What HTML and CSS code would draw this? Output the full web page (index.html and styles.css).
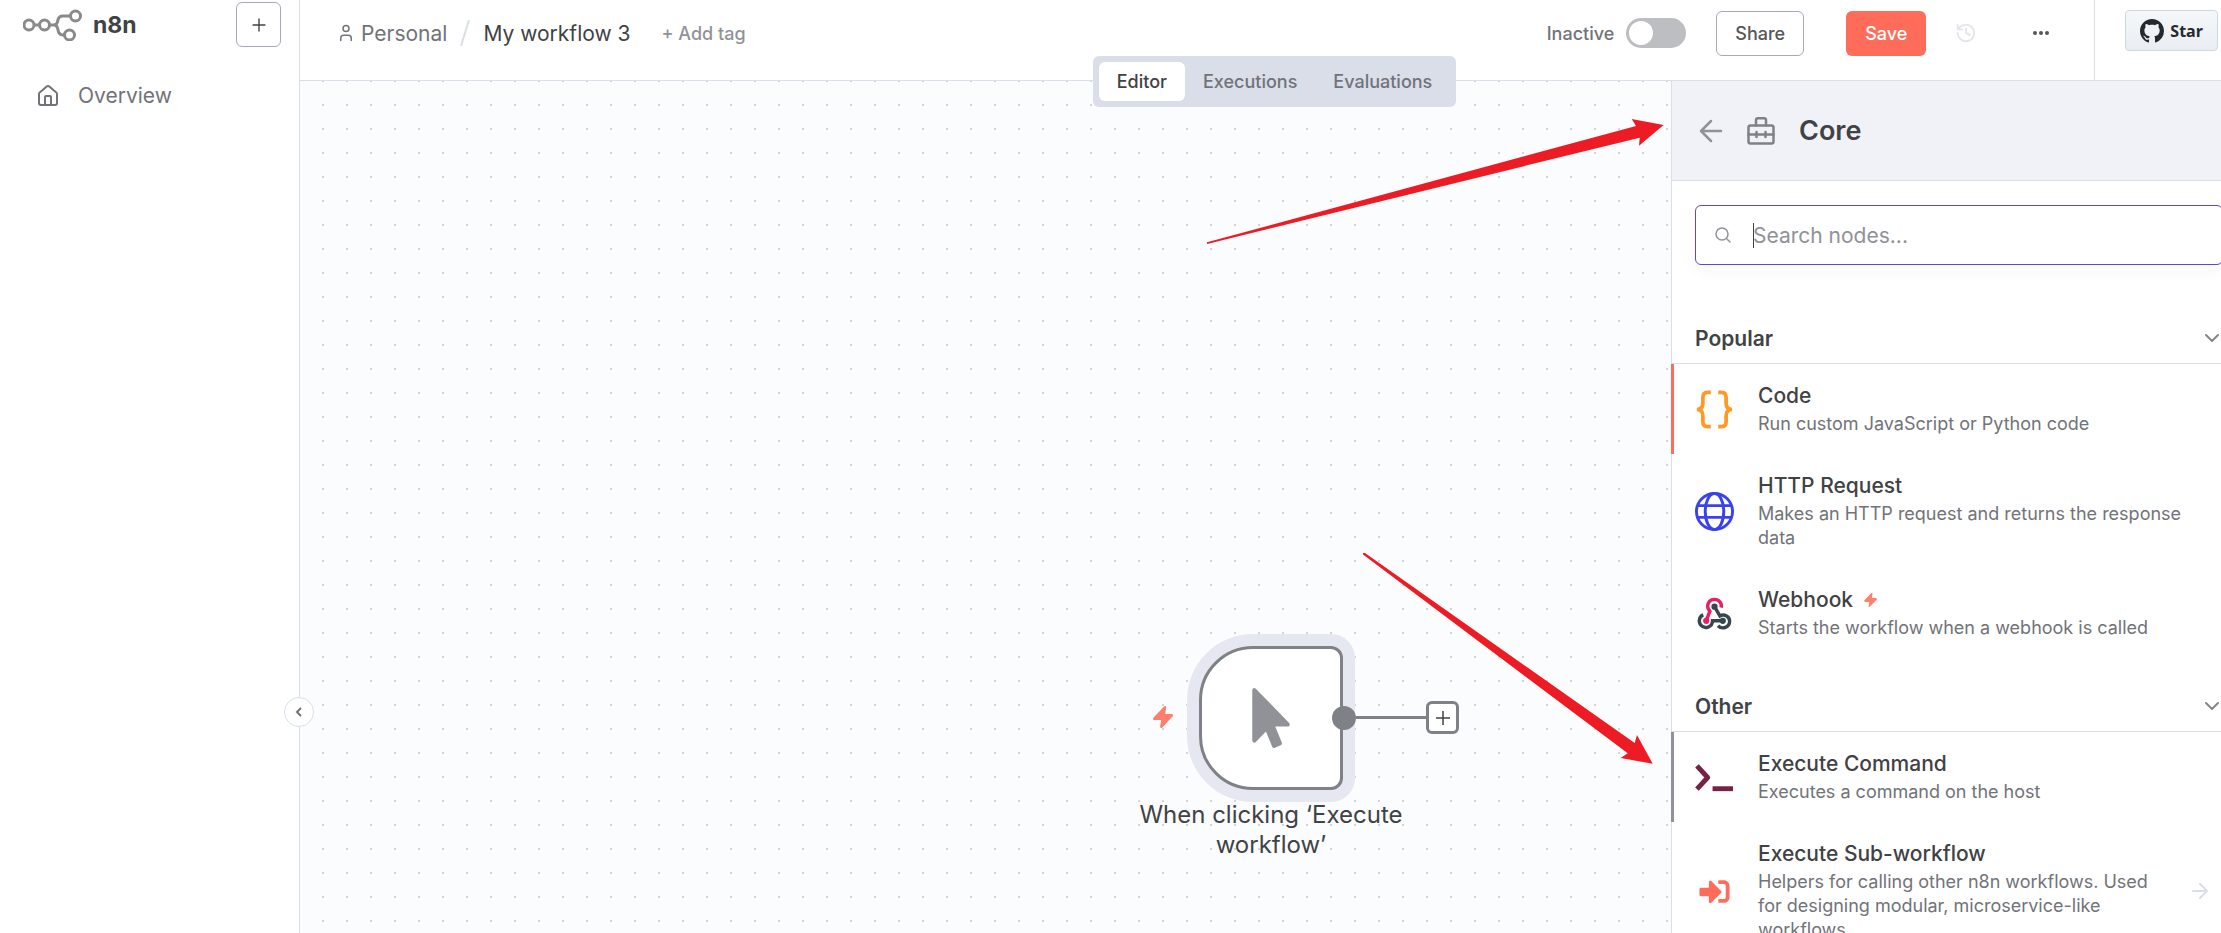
FILE: index.html
```html
<!DOCTYPE html>
<html lang="en">
<head>
<meta charset="utf-8">
<title>My workflow 3 - n8n</title>
<link rel="stylesheet" href="styles.css">
</head>
<body>
<div class="app">
  <aside class="sidebar">
    <div class="sidebar-top">
      <a class="brand" href="#">
        <svg class="brand-mark" viewBox="0 0 60 32" width="60" height="32" fill="none" stroke="currentColor" stroke-width="3">
          <circle cx="6" cy="16" r="5"/><circle cx="21.500" cy="16" r="5"/><circle cx="52.500" cy="7" r="5"/><circle cx="46.500" cy="26" r="5"/>
          <path d="M11 16h5.500M26.500 16h4c3 0 4-2 4.300-4.500C35.300 8.500 37 7 40 7h7.500M31 16c3 0 3.500 2 4 5 .500 3 2 5 5 5h1.500"/>
        </svg>
        <span class="brand-name">n8n</span>
      </a>
      <button class="add-button" aria-label="Add">
        <svg viewBox="0 0 24 24" width="24" height="24" fill="none" stroke="currentColor" stroke-width="2"><path d="M5 12h14M12 5v14"/></svg>
      </button>
    </div>
    <nav>
      <a class="nav-item" href="#">
        <svg viewBox="0 0 24 24" width="24" height="24" fill="none" stroke="currentColor" stroke-width="2" stroke-linecap="round" stroke-linejoin="round"><path d="M15 21v-8a1 1 0 0 0-1-1h-4a1 1 0 0 0-1 1v8"/><path d="M3 10a2 2 0 0 1 .709-1.528l7-5.999a2 2 0 0 1 2.582 0l7 5.999A2 2 0 0 1 21 10v9a2 2 0 0 1-2 2H5a2 2 0 0 1-2-2z"/></svg>
        <span>Overview</span>
      </a>
    </nav>
    <button class="collapse" aria-label="Collapse sidebar">
      <svg viewBox="0 0 12 12" width="12" height="12" fill="none" stroke="currentColor" stroke-width="2"><path d="M8 2 4 6l4 4"/></svg>
    </button>
  </aside>

  <div class="main">
    <header class="header">
      <div class="header-row">
        <div class="crumbs">
          <a class="crumb-project" href="#">
            <svg viewBox="0 0 24 24" width="18" height="18" fill="none" stroke="currentColor" stroke-width="2" stroke-linecap="round" stroke-linejoin="round"><path d="M19 22v-3a4 4 0 0 0-4-4H9a4 4 0 0 0-4 4v3"/><circle cx="12" cy="6" r="4"/></svg>
            <span>Personal</span>
          </a>
          <svg class="slash" viewBox="0 0 10 26" width="10" height="26" fill="none" stroke="currentColor" stroke-width="2"><path d="M9 0 1 26"/></svg>
          <h1 class="workflow-name">My workflow 3</h1>
          <button class="add-tag">+ Add tag</button>
        </div>
        <div class="actions">
          <label class="activation">
            <span>Inactive</span>
            <input class="switch" type="checkbox" role="switch">
          </label>
          <button class="btn share">Share</button>
          <button class="btn save">Save</button>
          <button class="icon-button history" aria-label="Workflow history">
            <svg viewBox="0 0 24 24" width="22" height="22" fill="none" stroke="currentColor" stroke-width="2" stroke-linecap="round" stroke-linejoin="round"><path d="M3 12a9 9 0 1 0 9-9 9.750 9.750 0 0 0-6.740 2.740L3 8"/><path d="M3 3v5h5"/><path d="M12 7v5l4 2"/></svg>
          </button>
          <button class="icon-button more" aria-label="More">
            <svg viewBox="0 0 18 6" width="18" height="6" fill="currentColor"><circle cx="3" cy="3" r="2"/><circle cx="9" cy="3" r="2"/><circle cx="15" cy="3" r="2"/></svg>
          </button>
        </div>
      </div>
      <div class="github">
        <a class="star" href="#">
          <svg viewBox="0 0 16 16" width="24" height="24" fill="currentColor"><path d="M8 0C3.580 0 0 3.580 0 8c0 3.540 2.290 6.530 5.470 7.590.4.070.55-.17.55-.38 0-.19-.01-.82-.01-1.490-2.010.37-2.530-.49-2.690-.94-.09-.23-.48-.94-.82-1.130-.28-.15-.68-.52-.01-.53.63-.01 1.080.58 1.230.82.72 1.210 1.870.87 2.330.66.07-.52.28-.87.51-1.070-1.780-.2-3.640-.89-3.640-3.950 0-.87.31-1.590.82-2.150-.08-.2-.36-1.020.08-2.120 0 0 .67-.21 2.200.82.64-.18 1.320-.27 2-.27s1.360.09 2 .27c1.530-1.040 2.200-.82 2.200-.82.44 1.100.16 1.920.08 2.120.51.56.82 1.270.82 2.150 0 3.070-1.870 3.750-3.650 3.950.29.25.54.73.54 1.480 0 1.070-.01 1.930-.01 2.200 0 .21.15.46.55.38A8.010 8.010 0 0 0 16 8c0-4.420-3.580-8-8-8z"/></svg>
          <span>Star</span>
        </a>
      </div>
      <div class="tabs-anchor">
        <div class="tabs" role="tablist">
          <button class="tab active" role="tab" aria-selected="true">Editor</button>
          <button class="tab" role="tab" aria-selected="false">Executions</button>
          <button class="tab" role="tab" aria-selected="false">Evaluations</button>
        </div>
      </div>
    </header>

    <div class="workspace">
      <main class="canvas">
        <div class="node">
          <svg class="node-bolt" viewBox="0 0 20 22" width="20" height="22" fill="currentColor"><path d="M11 .400c1-.900 2.400-.400 2.200 1L12.200 8H18.500c1.500 0 2 1.400 1 2.500L9.300 21.400c-1 1-2.500.400-2.200-1L8.200 14H1.500C0 14-.400 12.500.600 11.500z"/></svg>
          <div class="node-box">
            <svg viewBox="0 0 320 512" width="38" height="60" fill="currentColor"><path d="M302.189 329.126H196.105l55.831 135.993c3.889 9.428-.555 19.999-9.444 23.999l-49.165 21.427c-9.165 4-19.443-.571-23.332-9.714l-53.053-129.136-86.664 89.138C18.729 472.710 0 463.554 0 447.977V18.299C0 1.899 19.921-6.096 30.277 5.443l284.412 292.542c11.472 11.179 3.007 31.141-12.500 31.141z"/></svg>
          </div>
          <div class="connector">
            <span class="connector-dot"></span>
            <span class="connector-line"></span>
            <button class="connector-add" aria-label="Add node">
              <svg viewBox="0 0 14 14" width="14" height="14" fill="none" stroke="currentColor" stroke-width="1.500"><path d="M0 7h14M7 0v14"/></svg>
            </button>
          </div>
          <p class="node-label">When clicking ‘Execute workflow’</p>
        </div>
        <svg class="annotations" width="1400" height="800" viewBox="300 81 1400 800" fill="#ed1c24">
          <path d="M1207 242.300 1636 126 1631.700 119 1663.700 125 1639 145.700 1639.700 137.700 1207 244z"/>
          <path d="M1363 553h2L1634.700 743 1637 735 1652.700 763.700 1620.700 758 1627.700 753.300 1363 554.500z"/>
        </svg>
      </main>

      <aside class="panel">
        <div class="panel-header">
          <button class="back" aria-label="Back">
            <svg viewBox="0 0 24 24" width="24" height="24" fill="none" stroke="currentColor" stroke-width="2.500" stroke-linecap="round" stroke-linejoin="round"><path d="M12 2 2 12l10 10M2 12h20"/></svg>
          </button>
          <svg class="toolbox" viewBox="0 0 28 28" width="28" height="28" fill="none" stroke="currentColor" stroke-width="2.500" stroke-linecap="round" stroke-linejoin="round"><rect x="1.500" y="8.500" width="25" height="18" rx="2"/><path d="M9 8.500V3.300a2 2 0 0 1 2-2h6a2 2 0 0 1 2 2v5.200M1.500 17.500h25M9.500 15v5M18.500 15v5"/></svg>
          <h2 class="panel-title">Core</h2>
        </div>
        <label class="search">
          <svg viewBox="0 0 16 16" width="16" height="16" fill="none" stroke="currentColor" stroke-width="1.500" stroke-linecap="round"><circle cx="7" cy="7" r="6"/><path d="m12 12 3 3"/></svg>
          <span class="search-field">
            <input type="text" placeholder="Search nodes..." aria-label="Search nodes">
            <span class="caret"></span>
          </span>
        </label>

        <section class="category">
          <button class="category-head"><span>Popular</span>
            <svg viewBox="0 0 14 8" width="14" height="8" fill="none" stroke="currentColor" stroke-width="2" stroke-linecap="round" stroke-linejoin="round"><path d="m1 1 6 6 6-6"/></svg>
          </button>
          <ul class="items">
            <li><button class="item selected">
              <svg class="item-icon" viewBox="0 0 40 42" fill="none" stroke="#ff9922" stroke-width="4"><path d="M16 2.500h-3.500C9 2.500 7.500 5 7.500 8v6c0 4-2 7-6.500 7 4.500 0 6.500 3 6.500 7v6c0 3 1.500 5.500 5 5.500H16M24 2.500h3.500c3.500 0 5 2.500 5 5.500v6c0 4 2 7 6.500 7-4.500 0-6.500 3-6.500 7v6c0 3-1.500 5.500-5 5.500H24"/></svg>
              <span class="item-text"><span class="item-title">Code</span><span class="item-desc">Run custom JavaScript or Python code</span></span>
            </button></li>
            <li><button class="item">
              <svg class="item-icon" viewBox="0 0 40 40" fill="none" stroke="#3a42e9" stroke-width="3"><circle cx="20" cy="20" r="18.500"/><ellipse cx="20" cy="20" rx="9.500" ry="18.500"/><path d="M3 14h34M3 26h34"/></svg>
              <span class="item-text"><span class="item-title">HTTP Request</span><span class="item-desc">Makes an HTTP request and returns the response data</span></span>
            </button></li>
            <li><button class="item">
              <svg class="item-icon" viewBox="-3 -4 40 40" fill="none" stroke-width="3.500">
                <path stroke="#37474f" d="M17 9l5.500 9.500c4-2.500 10 0 10 5.500 0 6-7.500 9-12 4.500"/>
                <path stroke="#37474f" d="M5.500 17.500C1.500 19 0 24 3 28c4 4.500 12 2 12-4.500h10.500"/>
                <path stroke="#ea1e63" d="M23.800 10C25 5.500 21.500 1.500 17 1.500c-6 0-9.500 7-4.700 12.200L8.500 23"/>
                <g stroke="none"><circle cx="17" cy="9" r="3.200" fill="#37474f"/><circle cx="25.500" cy="23.500" r="3.200" fill="#37474f"/><circle cx="8.500" cy="23.500" r="3.200" fill="#ea1e63"/></g>
              </svg>
              <span class="item-text"><span class="item-title">Webhook <svg class="bolt" viewBox="0 0 20 22" width="13" height="14" fill="currentColor"><path d="M11 .400c1-.900 2.400-.400 2.200 1L12.200 8H18.500c1.500 0 2 1.400 1 2.500L9.300 21.400c-1 1-2.500.400-2.200-1L8.200 14H1.500C0 14-.400 12.500.600 11.500z"/></svg></span><span class="item-desc">Starts the workflow when a webhook is called</span></span>
            </button></li>
          </ul>
        </section>

        <section class="category">
          <button class="category-head"><span>Other</span>
            <svg viewBox="0 0 14 8" width="14" height="8" fill="none" stroke="currentColor" stroke-width="2" stroke-linecap="round" stroke-linejoin="round"><path d="m1 1 6 6 6-6"/></svg>
          </button>
          <ul class="items">
            <li><button class="item hovered">
              <svg class="item-icon" viewBox="0 0 40 40" fill="none" stroke="#772244" stroke-width="5" stroke-linejoin="round"><path d="M2 8l11 12L2 32"/><path d="M18 31.500h21"/></svg>
              <span class="item-text"><span class="item-title">Execute Command</span><span class="item-desc">Executes a command on the host</span></span>
            </button></li>
            <li><button class="item with-arrow">
              <svg class="item-icon" viewBox="-76 -76 664 664" fill="#ff6d5a"><path d="M416 448h-84c-6.600 0-12-5.400-12-12v-40c0-6.600 5.400-12 12-12h84c17.700 0 32-14.300 32-32V160c0-17.700-14.300-32-32-32h-84c-6.600 0-12-5.400-12-12V76c0-6.600 5.400-12 12-12h84c53 0 96 43 96 96v192c0 53-43 96-96 96zm-47-201L201 79c-15-15-41-4.500-41 17v96H24c-13.300 0-24 10.700-24 24v96c0 13.300 10.700 24 24 24h136v96c0 21.500 26 32 41 17l168-168c9.300-9.400 9.300-24.600 0-34z"/></svg>
              <span class="item-text"><span class="item-title">Execute Sub-workflow</span><span class="item-desc">Helpers for calling other n8n workflows. Used for designing modular, microservice-like workflows</span></span>
              <svg class="item-arrow" viewBox="0 0 16 16" width="16" height="16" fill="none" stroke="currentColor" stroke-width="2" stroke-linecap="round" stroke-linejoin="round"><path d="M1 8h14M8 1l7 7-7 7"/></svg>
            </button></li>
          </ul>
        </section>
      </aside>
    </div>
  </div>
</div>
</body>
</html>
```
FILE: styles.css
```css
:root {
  --text-dark: #414244;
  --text-base: #717379;
  --text-light: #909298;
  --line: #d9dee8;
  --primary: #ff6d5a;
}

* { box-sizing: border-box; }

body {
  margin: 0;
  font-family: Inter, "Liberation Sans", sans-serif;
  font-size: 18px;
  color: var(--text-base);
  background: #fff;
}

button {
  margin: 0;
  padding: 0;
  border: 0;
  background: none;
  color: inherit;
  font: inherit;
}

a { color: inherit; text-decoration: none; }
svg { display: block; flex: none; }
h1, h2, p, ul { margin: 0; padding: 0; }
ul { list-style: none; }

.app { display: flex; height: 100vh; overflow: hidden; }

/* Sidebar */
.sidebar {
  position: relative;
  z-index: 2;
  flex: none;
  width: 300px;
  border-right: 1px solid var(--line);
  background: #fff;
}
.sidebar-top {
  display: flex;
  align-items: center;
  justify-content: space-between;
  padding: 2px 18px 0 23px;
}
.brand { display: flex; align-items: center; gap: 10px; }
.brand-mark { color: #8a8a8a; }
.brand-name { font-size: 23px; font-weight: 700; color: var(--text-dark); }
.add-button {
  display: grid;
  place-items: center;
  width: 45px;
  height: 45px;
  border: 1px solid #a5aabb;
  border-radius: 6px;
  color: var(--text-dark);
}
.add-button svg { width: 22px; height: 22px; stroke-width: 1.5; }
.nav-item {
  display: flex;
  align-items: center;
  gap: 18px;
  margin-top: 31px;
  padding: 0 36px;
  font-size: 21px;
  line-height: 36px;
}
.collapse {
  position: absolute;
  top: 697px;
  right: -15px;
  display: grid;
  place-items: center;
  width: 30px;
  height: 30px;
  border: 1px solid var(--line);
  border-radius: 50%;
  background: #fff;
}

/* Header */
.main { display: flex; flex: 1; flex-direction: column; min-width: 0; }
.header {
  position: relative;
  z-index: 1;
  display: flex;
  flex: none;
  height: 81px;
  border-bottom: 1px solid var(--line);
  background: #fff;
}
.header-row {
  display: flex;
  flex: 1;
  align-items: center;
  justify-content: space-between;
  padding: 0 44px 14px 37px;
}
.crumbs { display: flex; align-items: center; font-size: 21px; }
.crumb-project { display: flex; align-items: center; gap: 6px; }
.slash { margin: 0 13px; color: var(--line); }
.workflow-name { font-size: 21px; font-weight: 400; color: var(--text-dark); }
.add-tag { margin-left: 31px; font-size: 18px; font-weight: 500; color: var(--text-light); }
.actions { display: flex; align-items: center; }
.activation { display: flex; align-items: center; gap: 12px; font-weight: 500; }
.switch {
  appearance: none;
  display: flex;
  align-items: center;
  width: 60px;
  height: 30px;
  margin: 0;
  padding: 3px;
  border-radius: 15px;
  background: #bdbec2;
}
.switch::before {
  content: "";
  width: 24px;
  height: 24px;
  border-radius: 50%;
  background: #fff;
}
.switch:checked { justify-content: flex-end; background: #3b9c5b; }
.btn { height: 45px; padding: 0 19px; border-radius: 6px; font-weight: 500; }
.share { margin-left: 30px; padding: 0 18px; border: 1px solid #a5aabb; color: #555659; }
.save { margin-left: 42px; background: var(--primary); color: #fff; }
.history { margin-left: 29px; color: #e3e5ea; }
.more { margin-left: 55px; color: #555659; }
.github {
  flex: none;
  padding: 10px 3px 0 30px;
  border-left: 1px solid var(--line);
}
.star {
  display: flex;
  align-items: center;
  gap: 6px;
  height: 41px;
  padding: 0 14px;
  border: 1px solid #ccd9e2;
  border-radius: 4px;
  background: linear-gradient(#f5f8fa, #e9edf2);
  color: #24292f;
  font-family: "Open Sans", "Noto Sans", sans-serif;
  font-size: 16px;
  font-weight: 700;
}
.tabs-anchor {
  position: absolute;
  top: 56px;
  left: 0;
  right: 0;
  display: flex;
  justify-content: center;
  padding-left: 28px;
}
.tabs { display: flex; padding: 6px; border-radius: 6px; background: #dadee9; }
.tab {
  height: 39px;
  padding: 0 18px;
  border-radius: 6px;
  font-weight: 500;
}
.tab.active { background: #fff; color: var(--text-dark); }

/* Canvas */
.workspace { display: flex; flex: 1; min-height: 0; }
.canvas {
  position: relative;
  flex: 1;
  background-color: #fbfcfe;
  background-image: radial-gradient(circle at 12px 12px, #d3d5da 1px, transparent 1px);
  background-size: 24px 24px;
  background-position: 11px -12px;
}
.node {
  position: absolute;
  left: 899px;
  top: 565px;
  width: 144px;
}
.node-box {
  display: grid;
  place-items: center;
  height: 144px;
  border: 3px solid #7e8186;
  border-radius: 54px 12px 12px 54px;
  background: #fff;
  box-shadow: 0 0 0 12px #e5e8f0;
  color: #909298;
}
.node-bolt { position: absolute; left: -46px; top: 60px; color: #ff7e6d; }
.connector {
  position: absolute;
  left: 133px;
  top: 55px;
  display: flex;
  align-items: center;
}
.connector-dot { width: 24px; height: 24px; border-radius: 50%; background: #7e8186; }
.connector-line { width: 70px; height: 3px; background: #7e8186; }
.connector-add {
  display: grid;
  place-items: center;
  width: 33px;
  height: 33px;
  border: 3px solid #7e8186;
  border-radius: 6px;
  background: #fff;
  color: var(--text-dark);
}
.node-label {
  width: 288px;
  margin: 10px -72px 0;
  font-size: 24px;
  font-weight: 400;
  line-height: 30px;
  text-align: center;
  color: var(--text-dark);
}
.annotations { position: absolute; top: 0; left: 0; pointer-events: none; }

/* Node creator */
.panel {
  flex: none;
  width: 550px;
  overflow: hidden;
  background: #fff;
  box-shadow: inset 1px 0 var(--line);
}
.panel-header {
  display: flex;
  align-items: center;
  height: 100px;
  padding: 0 27px;
  border-bottom: 1px solid var(--line);
  border-left: 1px solid var(--line);
  background: #f1f2f8;
}
.back { color: var(--text-light); }
.toolbox { margin: 0 24px 0 24px; color: #7e8186; }
.panel-title { font-size: 27px; font-weight: 600; color: var(--text-dark); }
.search {
  display: flex;
  align-items: center;
  gap: 22px;
  height: 60px;
  margin: 24px -2px 0 24px;
  padding: 0 19px;
  border: 1px solid #5b4cc4;
  border-radius: 6px;
  color: var(--text-light);
  box-shadow: 0 6px 16px rgba(60, 60, 90, 0.04);
}
.search-field { position: relative; flex: 1; }
.search input {
  display: block;
  width: 100%;
  padding: 0;
  border: 0;
  outline: 0;
  background: none;
  font: inherit;
  font-size: 21px;
  color: var(--text-dark);
}
.search input::placeholder { color: var(--text-light); opacity: 1; }
.caret { position: absolute; left: 0; top: 0; bottom: 0; width: 1px; background: var(--text-dark); }

.category { margin-top: 48px; }
.category + .category { margin-top: 23px; }
.category-head {
  display: flex;
  align-items: center;
  justify-content: space-between;
  width: 100%;
  height: 51px;
  padding: 0 2px 0 24px;
  border-bottom: 1px solid var(--line);
  font-size: 21px;
  font-weight: 600;
  color: var(--text-dark);
}
.category-head svg { color: #85878d; }
.item {
  display: flex;
  align-items: center;
  gap: 24px;
  width: 100%;
  padding: 18px 13px 18px 24px;
  text-align: left;
}
.item.selected { box-shadow: inset 3px 0 var(--primary); }
.item.hovered { box-shadow: inset 3px 0 #909298; }
.item-icon { width: 39px; height: 39px; }
.item-text { display: flex; flex: 1; flex-direction: column; gap: 3px; padding-right: 22px; }
.with-arrow .item-text { padding-right: 0; }
.item-title {
  display: flex;
  align-items: center;
  gap: 11px;
  font-size: 21px;
  font-weight: 500;
  line-height: 27px;
  color: var(--text-dark);
}
.item-desc { line-height: 24px; }
.bolt { color: #ff7e6d; }
.item-arrow { color: var(--line); }
```
